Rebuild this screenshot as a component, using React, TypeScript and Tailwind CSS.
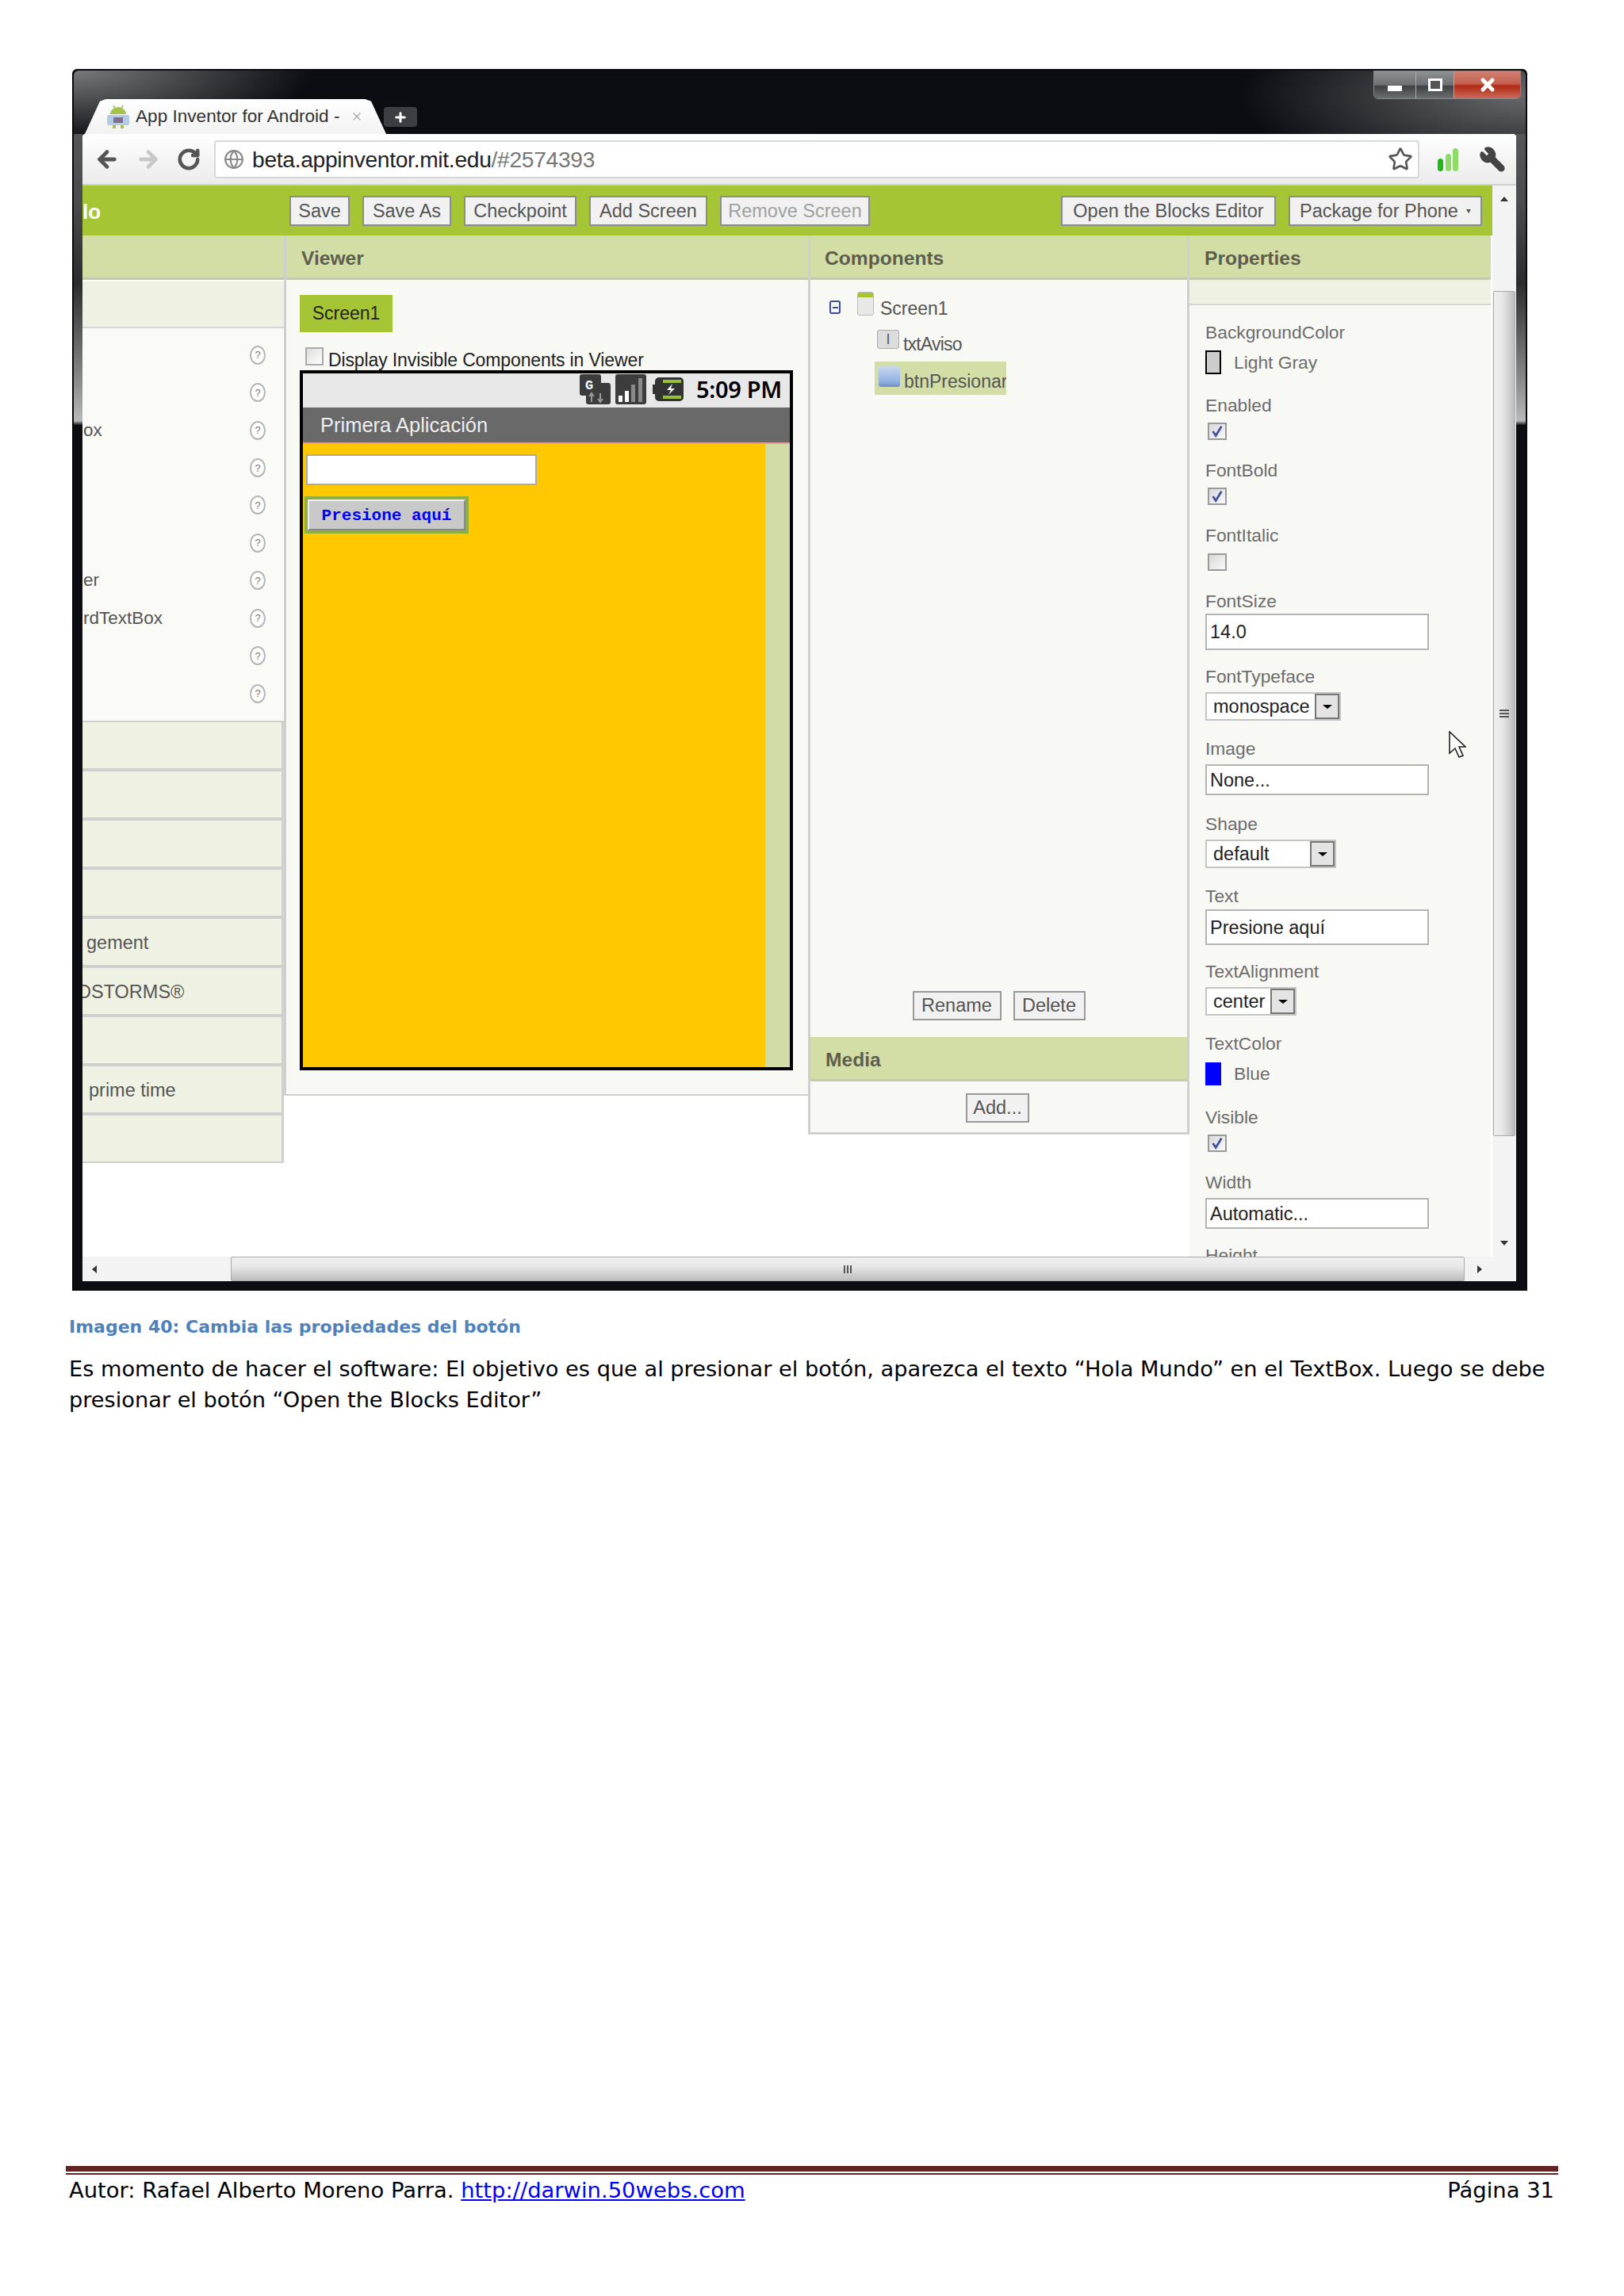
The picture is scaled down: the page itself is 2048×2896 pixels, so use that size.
import {ArrowLeft, ArrowRight, Globe, Plus, RotateCw, Star, Wrench, X} from "lucide-react";

const UI = "font-['Liberation_Sans',Arial,sans-serif]";

const TopButton = ({label, className}: {label: string; className: string}) => (
    <div className={`flex h-[38px] items-center justify-center border-2 border-[#8c8c8c] bg-[#f1f1f1] pt-[2px] text-[23.5px] ${className}`}>
        {label}
    </div>
);

const Header = ({title, pad}: {title: string; pad: string}) => (
    <div className={`flex h-[56px] items-center border-b-[3px] border-[#c3c8ae] bg-[#d3dea6] pt-[6px] text-[24.6px] font-bold text-[#5d5d50] ${pad}`}>
        {title}
    </div>
);

const Help = () => (
    <div className="flex h-[24px] w-[20px] items-center justify-center rounded-[50%] border-2 border-[#b5b5b5] bg-white text-[13px] leading-none text-[#777]">
        ?
    </div>
);

const paletteRows = ["", "", "ox", "", "", "", "er", "rdTextBox", "", ""];
const drawers = [
    {label: "", cls: ""},
    {label: "", cls: ""},
    {label: "", cls: ""},
    {label: "", cls: ""},
    {label: "gement", cls: "pl-[5px]"},
    {label: "DSTORMS®", cls: "-ml-[6px]"},
    {label: "", cls: ""},
    {label: "prime time", cls: "pl-[8px]"},
    {label: "", cls: ""},
];

const Label = ({text, className}: {text: string; className: string}) => (
    <div className={`h-[26px] text-[22.8px] leading-[26px] text-[#6d6d6d] ${className}`}>{text}</div>
);

const Checkbox = ({checked, className}: {checked: boolean; className: string}) => (
    <div className={`ml-[3px] flex h-[22px] w-[24px] items-center justify-center border-2 border-[#9a9a9a] bg-gradient-to-br from-[#d8d8d8] to-[#fafafa] ${className}`}>
        {checked && (
            <svg viewBox="0 0 20 20" className="h-[18px] w-[18px]">
                <path d="M4 10l4 6 8-13" fill="none" stroke="#3f4f9f" strokeWidth="3"/>
            </svg>
        )}
    </div>
);

const Field = ({value, className}: {value: string; className: string}) => (
    <div className={`flex w-[282px] items-center border-2 border-[#b4b4b4] bg-white pl-[4px] pt-[2px] text-[23.5px] text-[#222] ${className}`}>
        {value}
    </div>
);

const Select = ({value, className}: {value: string; className: string}) => (
    <div className={`flex h-[36px] items-center border-2 border-[#c4c4c4] bg-white pl-[8px] text-[23.5px] text-[#222] ${className}`}>
        <span className="pt-[1px]">{value}</span>
        <div className="ml-auto flex h-full w-[31px] items-center justify-center border-2 border-[#777] bg-[#e4e4e4]">
            <div className="h-0 w-0 border-x-[6px] border-t-[5px] border-x-transparent border-t-black"/>
        </div>
    </div>
);

const Properties = () => (
    <div className="relative flex-1 overflow-hidden bg-[#f8f8f4] pl-[20px] pt-[21px]">
        <Label text="BackgroundColor" className=""/>
        <div className="mt-[10px] flex h-[30px] items-center">
            <div className="h-[30px] w-[20px] border-2 border-black bg-[#cccccc]"/>
            <span className="ml-[16px] text-[22.8px] text-[#6d6d6d]">Light Gray</span>
        </div>
        <Label text="Enabled" className="mt-[26px]"/>
        <Checkbox checked className="mt-[9px]"/>
        <Label text="FontBold" className="mt-[25px]"/>
        <Checkbox checked className="mt-[9px]"/>
        <Label text="FontItalic" className="mt-[25px]"/>
        <Checkbox checked={false} className="mt-[10px]"/>
        <Label text="FontSize" className="mt-[25px]"/>
        <Field value="14.0" className="mt-[3px] h-[46px]"/>
        <Label text="FontTypeface" className="mt-[20px]"/>
        <Select value="monospace" className="mt-[7px] w-[171px]"/>
        <Label text="Image" className="mt-[22px]"/>
        <Field value="None..." className="mt-[7px] h-[39px]"/>
        <Label text="Shape" className="mt-[23px]"/>
        <Select value="default" className="mt-[7px] w-[165px]"/>
        <Label text="Text" className="mt-[22px]"/>
        <Field value="Presione aquí" className="mt-[4px] h-[45px]"/>
        <Label text="TextAlignment" className="mt-[20px]"/>
        <Select value="center" className="mt-[7px] w-[115px]"/>
        <Label text="TextColor" className="mt-[22px]"/>
        <div className="mt-[11px] flex h-[29px] items-center">
            <div className="h-[29px] w-[20px] bg-[#0000ff]"/>
            <span className="ml-[16px] text-[22.8px] text-[#6d6d6d]">Blue</span>
        </div>
        <Label text="Visible" className="mt-[27px]"/>
        <Checkbox checked className="mt-[9px]"/>
        <Label text="Width" className="mt-[25px]"/>
        <Field value="Automatic..." className="mt-[7px] h-[39px]"/>
        <Label text="Height" className="mt-[20px]"/>
        {/* mouse pointer left in the capture */}
        <svg viewBox="0 0 22 36" className="absolute left-[327px] top-[537px] h-[36px] w-[22px]">
            <path d="M1 1v27l7-6 5 11 5-2-5-11h8z" fill="#fff" stroke="#222" strokeWidth="1.6"/>
        </svg>
    </div>
);

const AndroidIcon = () => (
    <svg viewBox="0 0 30 32" className="h-[32px] w-[30px] shrink-0">
        <path d="M9 2l2 4M21 2l-2 4" stroke="#9bbf3a" strokeWidth="1.6"/>
        <path d="M5 13a10 9 0 0 1 20 0z" fill="#a3c24a"/>
        <rect x="1" y="14" width="28" height="13" rx="2" fill="#b4cbe6"/>
        <rect x="9" y="17" width="12" height="7" fill="#7d6f8f"/>
        <rect x="8" y="27" width="4" height="4" fill="#a3c24a"/>
        <rect x="18" y="27" width="4" height="4" fill="#a3c24a"/>
    </svg>
);

const StatusIcons = () => (
    <div className="flex items-center">
        <svg viewBox="0 0 39 38" className="h-[38px] w-[39px]">
            <rect x="0" y="0" width="27" height="27" rx="3" fill="#3c3c3c"/>
            <rect x="8" y="11" width="31" height="27" rx="3" fill="#3c3c3c"/>
            <text x="7" y="19" fontSize="17" fontWeight="700" fill="#fff" fontFamily="Liberation Mono">G</text>
            <path d="M15 35V25m-3 3l3-4 3 4M26 24v10m-3-3l3 4 3-4" stroke="#999" strokeWidth="2" fill="none"/>
        </svg>
        <svg viewBox="0 0 39 38" className="ml-[6px] h-[38px] w-[39px]">
            <rect width="39" height="38" rx="3" fill="#3c3c3c"/>
            <rect x="4" y="27" width="5" height="8" fill="#fff"/>
            <rect x="12" y="21" width="5" height="14" fill="#fff"/>
            <rect x="20" y="13" width="5" height="22" fill="#8a8a8a"/>
            <rect x="29" y="5" width="5" height="30" fill="#8a8a8a"/>
        </svg>
        <svg viewBox="0 0 39 30" className="ml-[8px] h-[30px] w-[39px]">
            <rect x="3" y="0" width="36" height="30" rx="5" fill="#333"/>
            <rect x="0" y="9" width="4" height="12" fill="#333"/>
            <rect x="13" y="3" width="23" height="4" fill="#9bbf3a"/>
            <rect x="13" y="23" width="23" height="4" fill="#9bbf3a"/>
            <path d="M25 8l-7 8h5l-3 6 8-8h-5z" fill="#fff"/>
        </svg>
    </div>
);

const sideStrip = "shrink-0 bg-[linear-gradient(to_bottom,#555659_0,#4a4b4e_6%,#2b2c2e_13%,#8f9092_22%,#b8b9bb_25%,#0b0d12_25.4%)]";

const App = () => {
    return (
        <div className="flex h-[2896px] w-full flex-col bg-white pt-[87px] font-['DejaVu_Sans',Verdana,sans-serif] text-black">
            {/* browser window */}
            <div className={`ml-[91px] flex h-[1541px] w-[1835px] flex-col rounded-t-[6px] border-x-2 border-t-2 border-b-2 border-[#0a0a0a] bg-[#0b0d12] ${UI}`}>
                <div className="flex h-[80px] shrink-0 rounded-t-[6px] bg-[radial-gradient(ellipse_300px_90px_at_0%_0%,#77797c,#0b0d12),radial-gradient(ellipse_360px_110px_at_100%_40%,#66686b,#0b0d12)] [background-blend-mode:lighten]">
                    <div className="flex flex-1 items-end pl-[14px]">
                        <div className="flex h-[44px] w-[380px] items-center bg-gradient-to-b from-white to-[#f2f2f2] pl-[27px] [clip-path:polygon(0_100%,5%_6%,7%_0,93%_0,95%_6%,100%_100%)]">
                            <AndroidIcon/>
                            <span className="ml-[7px] whitespace-nowrap text-[22.6px] text-[#333]">App Inventor for Android -</span>
                            <X className="ml-[14px] h-[16px] w-[16px] text-[#aaa]" strokeWidth={2}/>
                        </div>
                        <div className="mb-[9px] ml-[-3px] flex h-[25px] w-[42px] items-center justify-center rounded-[4px] bg-[#3b3e42]">
                            <Plus className="h-[18px] w-[18px] text-white" strokeWidth={4}/>
                        </div>
                    </div>
                    <div className="mr-[6px] flex h-[36px] w-[186px] overflow-hidden rounded-b-[6px] border border-[#888]">
                        <div className="flex w-[52px] items-center justify-center bg-[linear-gradient(to_bottom,#8e9194,#6e7174_50%,#3f4245_55%,#6c6f72)]">
                            <div className="mt-[8px] h-[7px] w-[18px] bg-white"/>
                        </div>
                        <div className="flex w-[49px] items-center justify-center border-x border-[#aaa] bg-[linear-gradient(to_bottom,#8e9194,#6e7174_50%,#3f4245_55%,#6c6f72)]">
                            <div className="h-[16px] w-[18px] border-[3px] border-white bg-[#555]"/>
                        </div>
                        <div className="flex flex-1 items-center justify-center bg-[linear-gradient(to_bottom,#cf8074,#c4604f_45%,#b02a16_55%,#cc6a5a)]">
                            <X className="h-[24px] w-[24px] text-white" strokeWidth={5}/>
                        </div>
                    </div>
                </div>
                <div className="flex min-h-0 flex-1">
                    <div className={`w-[11px] ${sideStrip}`}/>
                    <div className="flex w-[1808px] flex-col rounded-t-[4px] bg-white">
                        {/* chrome toolbar */}
                        <div className="flex h-[65px] shrink-0 items-center rounded-t-[4px] border-b-2 border-[#d0d0d0] bg-gradient-to-b from-white to-[#ebebeb]">
                            <ArrowLeft className="ml-[15px] h-[32px] w-[32px] text-[#555]" strokeWidth={3.6}/>
                            <ArrowRight className="ml-[20px] h-[32px] w-[32px] text-[#c8c8c8]" strokeWidth={3.6}/>
                            <RotateCw className="ml-[20px] h-[30px] w-[30px] text-[#555]" strokeWidth={3.6}/>
                            <div className="ml-[17px] flex h-[48px] w-[1520px] items-center rounded-[4px] border-2 border-[#d8d8d8] bg-white">
                                <Globe className="ml-[10px] h-[26px] w-[26px] text-[#8a8a8a]" strokeWidth={2}/>
                                <span className="ml-[10px] pt-[2px] text-[28.2px] tracking-[-0.3px] text-[#222]">
                                    beta.appinventor.mit.edu<span className="text-[#777]">/#2574393</span>
                                </span>
                                <Star className="ml-auto mr-[6px] h-[32px] w-[32px] text-[#555]" strokeWidth={2}/>
                            </div>
                            <svg viewBox="0 0 28 30" className="ml-[22px] h-[30px] w-[28px]">
                                <rect x="1" y="14" width="7" height="16" rx="3.5" fill="#22b814"/>
                                <rect x="11" y="8" width="7" height="22" rx="3.5" fill="#8edb68"/>
                                <rect x="20" y="1" width="7" height="29" rx="3.5" fill="#8edb68"/>
                            </svg>
                            <Wrench className="ml-[25px] h-[34px] w-[34px] -scale-x-100 fill-[#444] text-[#444]" strokeWidth={2}/>
                        </div>
                        <div className="flex min-h-0 flex-1">
                            <div className="flex w-[1778px] flex-col">
                                {/* green bar */}
                                <div className="flex h-[63px] shrink-0 items-center bg-[#a6c535] text-[#555]">
                                    <div className="w-[261px] pt-[3px] text-[26px] font-bold text-white">lo</div>
                                    <div className="flex flex-1 gap-[16px]">
                                        <TopButton label="Save" className="w-[76px]"/>
                                        <TopButton label="Save As" className="w-[112px]"/>
                                        <TopButton label="Checkpoint" className="w-[142px]"/>
                                        <TopButton label="Add Screen" className="w-[149px]"/>
                                        <TopButton label="Remove Screen" className="w-[189px] text-[#a0a0a0]"/>
                                        <TopButton label="Open the Blocks Editor" className="ml-auto w-[271px]"/>
                                        <div className="mr-[13px] flex h-[38px] w-[244px] items-center justify-center gap-[10px] border-2 border-[#8c8c8c] bg-[#f1f1f1] pt-[2px] text-[23.5px]">
                                            Package for Phone
                                            <div className="h-0 w-0 border-x-[3px] border-t-[5px] border-x-transparent border-t-[#555]"/>
                                        </div>
                                    </div>
                                </div>
                                <div className="flex min-h-0 flex-1 overflow-hidden text-[#555]">
                                    {/* palette */}
                                    <div className="flex w-[254px] shrink-0 flex-col self-start overflow-hidden">
                                        <Header title="" pad=""/>
                                        <div className="mt-[2px] h-[59px] border-b-2 border-[#d5d5d5] bg-[#eff2e3]"/>
                                        <div className="bg-[#fafaf6] pb-[10.5px] pt-[10px]">
                                            {paletteRows.map((row, index) => (
                                                <div key={index} className="flex h-[47.45px] items-center justify-between pl-[1px] pr-[23px] text-[22.5px] text-[#555]">
                                                    <span>{row}</span>
                                                    <Help/>
                                                </div>
                                            ))}
                                        </div>
                                        {drawers.map((drawer, index) => (
                                            <div key={index} className="flex h-[62px] items-center whitespace-nowrap border-y-2 border-r-[3px] border-[#d0d0d0] bg-[#eff2e3] pt-[4px] text-[23.5px] text-[#555]">
                                                <span className={drawer.cls}>{drawer.label}</span>
                                            </div>
                                        ))}
                                    </div>
                                    {/* viewer */}
                                    <div className="flex w-[661px] shrink-0 flex-col self-start border-l-[3px] border-[#cfcfcf]">
                                        <Header title="Viewer" pad="pl-[19px]"/>
                                        <div className="h-[1029px] border-b-2 border-[#d0d0d0] bg-[#f8f8f4] pl-[17px] pt-[19px]">
                                            <div className="flex h-[47px] w-[117px] items-center justify-center bg-[#a6c535] text-[23px] text-[#222]">Screen1</div>
                                            <div className="mt-[19px] flex h-[29px] items-start pl-[7px]">
                                                <div className="h-[23px] w-[23px] border-2 border-[#aaa] bg-gradient-to-br from-[#ddd] to-white"/>
                                                <span className="ml-[6px] pt-[4px] text-[23px] leading-[24px] tracking-[-0.12px] text-[#222]">Display Invisible Components in Viewer</span>
                                            </div>
                                            {/* phone */}
                                            <div className="flex h-[883px] w-[622px] flex-col border-4 border-black">
                                                <div className="flex h-[43px] shrink-0 items-center justify-end bg-[#e8e8e8] pb-[3px] pr-[10px]">
                                                    <StatusIcons/>
                                                    <span className="ml-[16px] font-['Noto_Sans',sans-serif] text-[29px] font-semibold tracking-[-0.3px] text-black">5:09 PM</span>
                                                </div>
                                                <div className="flex h-[46px] shrink-0 items-center border-b-2 border-[#e0a0a0] bg-[#696969] pl-[22px] text-[25.5px] text-[#eeeeee]">
                                                    Primera Aplicación
                                                </div>
                                                <div className="flex min-h-0 flex-1 bg-[#d2dca5]">
                                                    <div className="w-[583px] bg-[#ffc800] pl-[4px] pt-[13px]">
                                                        <div className="h-[39px] w-[291px] border-2 border-[#aaa] bg-white"/>
                                                        <div className="-ml-[2px] mt-[14px] w-[207px] border-4 border-[#8fb13c]">
                                                            <div className="flex h-[39px] items-center justify-center border-2 border-t-[#eee] border-l-[#eee] border-b-[#888] border-r-[#888] bg-[#c9c9c9] pt-[2px] font-['Liberation_Mono',monospace] text-[21px] font-bold text-[#0000ff]">
                                                                Presione aquí
                                                            </div>
                                                        </div>
                                                    </div>
                                                </div>
                                            </div>
                                        </div>
                                    </div>
                                    {/* components + media */}
                                    <div className="flex h-[1134px] w-[481px] shrink-0 flex-col self-start border-x-[3px] border-b-[3px] border-[#cfcfcf]">
                                        <Header title="Components" pad="pl-[18px]"/>
                                        <div className="flex h-[955px] flex-col bg-[#f8f8f4] pt-[15px] text-[23px]">
                                            <div className="flex h-[30px] items-start pl-[24px]">
                                                <div className="mt-[11px] flex h-[17px] w-[14px] items-center justify-center rounded-[3px] border-2 border-[#3d4ba0]">
                                                    <div className="h-[2px] w-[7px] bg-[#3d4ba0]"/>
                                                </div>
                                                <div className="ml-[21px] h-[30px] w-[21px] rounded-[3px] border border-[#bbb] bg-[linear-gradient(to_bottom,#a6c535_0,#a6c535_20%,#e8e8e8_20%)]"/>
                                                <span className="ml-[8px] mt-[8px] leading-[26px]">Screen1</span>
                                            </div>
                                            <div className="mt-[18px] flex h-[26px] items-start pl-[84px]">
                                                <div className="flex h-[24px] w-[28px] items-center justify-center rounded-[3px] border border-[#aaa] bg-[#dcdcdc] text-[18px] leading-none text-[#556]">I</div>
                                                <span className="ml-[5px] mt-[5px] leading-[26px] tracking-[-0.8px]">txtAviso</span>
                                            </div>
                                            <div className="ml-[81px] mt-[14px] flex h-[42px] w-[166px] items-start overflow-hidden bg-[#d3dea6] pl-[5px] pt-[6px]">
                                                <div className="h-[26px] w-[27px] shrink-0 rounded-[3px] bg-[linear-gradient(to_bottom,#c9d9f0,#8fb0e0_75%,#6d8fc8)]"/>
                                                <span className="ml-[5px] mt-[6px] leading-[26px]">btnPresionar</span>
                                            </div>
                                            <div className="mb-[21px] mt-auto flex justify-center gap-[15px] text-[23.5px]">
                                                <div className="flex h-[37px] w-[112px] items-center justify-center border-2 border-[#999] bg-[#f1f1f1]">Rename</div>
                                                <div className="flex h-[37px] w-[91px] items-center justify-center border-2 border-[#999] bg-[#f1f1f1]">Delete</div>
                                            </div>
                                        </div>
                                        <Header title="Media" pad="pl-[19px]"/>
                                        <div className="flex flex-1 items-start justify-center bg-[#f8f8f4] pr-[3px] pt-[15px]">
                                            <div className="flex h-[37px] w-[80px] items-center justify-center border-2 border-[#999] bg-[#f1f1f1] text-[23.5px]">Add...</div>
                                        </div>
                                    </div>
                                    {/* properties */}
                                    <div className="flex w-[380px] shrink-0 flex-col">
                                        <Header title="Properties" pad="pl-[19px]"/>
                                        <div className="h-[32px] shrink-0 border-b-2 border-[#d5d5d5] bg-[#eff2e3]"/>
                                        <Properties/>
                                    </div>
                                </div>
                                {/* horizontal scrollbar */}
                                <div className="flex h-[31px] shrink-0 items-center bg-[#f3f3f3]">
                                    <div className="ml-[12px] h-0 w-0 border-y-[5px] border-r-[6px] border-y-transparent border-r-[#333]"/>
                                    <div className="ml-[169px] flex h-full w-[1556px] items-center justify-center rounded-[2px] border border-[#aaa] bg-[linear-gradient(to_bottom,#efefef,#e8e8e8_40%,#bcbcbc)]">
                                        <div className="flex gap-[2px]">
                                            <div className="h-[10px] w-[2px] bg-[#555]"/>
                                            <div className="h-[10px] w-[2px] bg-[#555]"/>
                                            <div className="h-[10px] w-[2px] bg-[#555]"/>
                                        </div>
                                    </div>
                                    <div className="ml-[16px] h-0 w-0 border-y-[5px] border-l-[6px] border-y-transparent border-l-[#333]"/>
                                </div>
                            </div>
                            {/* vertical scrollbar */}
                            <div className="flex w-[30px] shrink-0 flex-col items-center bg-[#f3f3f3]">
                                <div className="mt-[14px] h-0 w-0 border-x-[5px] border-b-[6px] border-x-transparent border-b-[#333]"/>
                                <div className="mt-[113px] flex h-[1066px] w-[28px] items-center justify-center rounded-[2px] border border-[#aaa] bg-[linear-gradient(to_right,#efefef,#e8e8e8_40%,#bcbcbc)]">
                                    <div className="flex flex-col gap-[2px]">
                                        <div className="h-[2px] w-[12px] bg-[#555]"/>
                                        <div className="h-[2px] w-[12px] bg-[#555]"/>
                                        <div className="h-[2px] w-[12px] bg-[#555]"/>
                                    </div>
                                </div>
                                <div className="mt-[132px] h-0 w-0 border-x-[5px] border-t-[6px] border-x-transparent border-t-[#333]"/>
                            </div>
                        </div>
                    </div>
                    <div className={`w-[12px] ${sideStrip}`}/>
                </div>
                <div className="h-[10px] shrink-0"/>
            </div>

            {/* document text */}
            <div className="ml-[87px] mt-[31px] w-[1870px]">
                <p className="text-[22px] font-bold leading-[30px] text-[#4f81bd]">Imagen 40: Cambia las propiedades del botón</p>
                <p className="mt-[18px] text-[27.2px] leading-[39px]">
                    Es momento de hacer el software: El objetivo es que al presionar el botón, aparezca el texto “Hola Mundo” en el TextBox. Luego se debe presionar el botón “Open the Blocks Editor”
                </p>
            </div>

            {/* footer */}
            <div className="ml-[83px] mt-auto w-[1882px] pb-[115px]">
                <div className="h-[7px] bg-[#622423]"/>
                <div className="mt-[2px] h-[2px] bg-[#622423]"/>
                <div className="mt-[2px] flex items-center justify-between pl-[4px] pr-[5px] text-[27.4px] leading-[36px]">
                    <span>
                        Autor: Rafael Alberto Moreno Parra.{" "}
                        <a className="text-[#0000ff] underline" href="#">http://darwin.50webs.com</a>
                    </span>
                    <span>Página 31</span>
                </div>
            </div>
        </div>
    )
}

export default App
